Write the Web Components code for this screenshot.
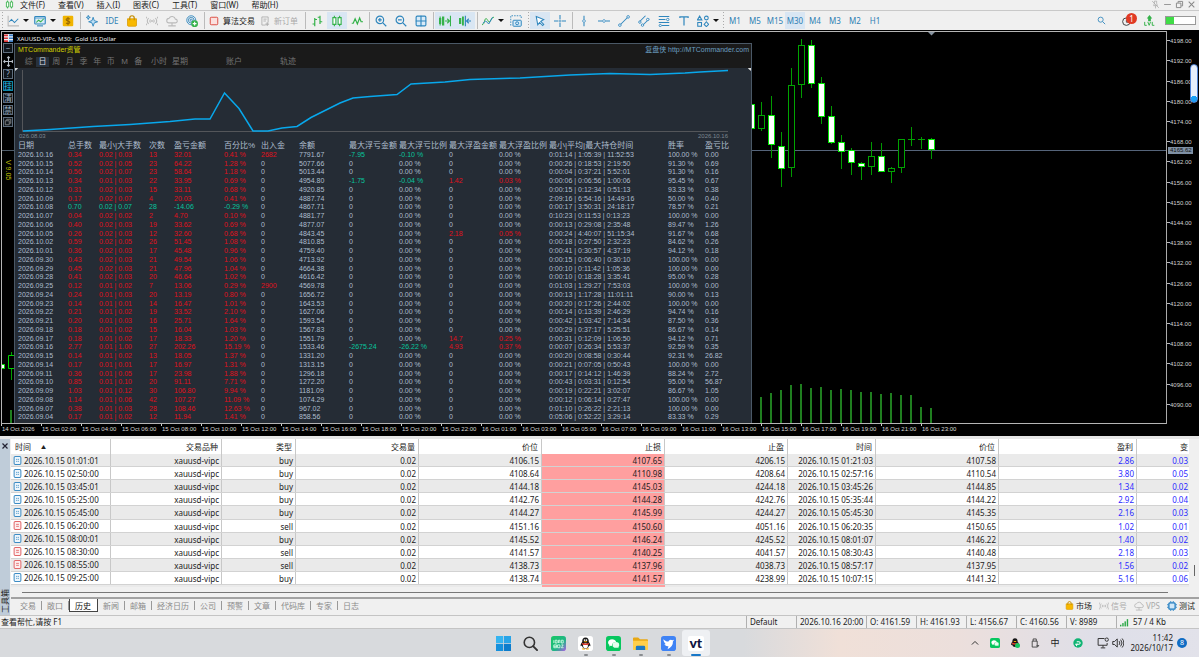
<!DOCTYPE html>
<html lang="zh-CN">
<head>
<meta charset="utf-8">
<title>XAUUSD-VIPc, M30</title>
<style>
  html, body { margin: 0; height: 100%; overflow: hidden; }
  body { font: 8px/10px "Noto Sans", "Noto Sans CJK SC", sans-serif; color: #222; background: #f0f0f0; }
</style>
</head>
<body>
<terminal-app></terminal-app>
<script>
const define = (name, css, html, after) => {
  const tpl = document.createElement('template');
  tpl.innerHTML = `<style>*{box-sizing:border-box}button{font:inherit;color:inherit;background:none;border:0;padding:0;margin:0}${css}</style>${html}`;
  customElements.define(name, class extends HTMLElement {
    connectedCallback() {
      if (this.shadowRoot) return;
      this.attachShadow({ mode: 'open' }).append(tpl.content.cloneNode(true));
      if (after) after(this.shadowRoot, this);
    }
  });
};

/* ---------- icons, drawn on a 16 unit square ---------- */
const B = '#2f86bd', G = '#35b24a', Y = '#f0b400', X = '#b9b9b9';
const st = (c, w = 1.4) => `fill="none" stroke="${c}" stroke-width="${w}"`;
const ICONS = {
  logo: `<g ${st(G, 1.5)}><path d="M4.500 1v14M11.500 1v14"/><path fill="#fff" d="M2.500 3.500h4v9h-4zM9.500 3.500h4v9h-4z"/></g>`,
  linechart: `<path ${st(X)} d="M1.500 1v13.500H16"/><path ${st(B)} d="M3 9l3-3 4 4 5-5"/>`,
  chartwin: `<rect x="1" y="2" width="14" height="10" rx="1" fill="#d8ebf8" stroke="${B}" stroke-width="1.500"/><path ${st(G)} d="M3 10l3-3 3 2 4-4"/><path ${st(B)} d="M4 14.500h8"/><path stroke="${B}" d="M1 4h14"/>`,
  dollar: `<rect x="1" y="1" width="14" height="14" rx="1.500" fill="${Y}"/><path ${st('#9a6a00', 1.5)} d="M10.500 5.500c-1-1.300-5-1.300-5 .8 0 2.200 5 1.200 5 3.500 0 2-4 2-5 .6M8 2.500v11"/>`,
  spark: `<g fill="#bfe0f5" stroke="${B}" stroke-width="1.200"><path d="M9.500 3l1.500 4.500L15.500 9 11 10.500 9.500 15 8 10.500 3.500 9 8 7.500z"/><path d="M3 .5l.7 2 2 .7-2 .7L3 6l-.7-2L.5 3.200l2-.7z"/></g>`,
  bag: `<path d="M2 5h12v8.500a1.500 1.500 0 0 1-1.500 1.500h-9A1.500 1.500 0 0 1 2 13.500z" fill="#f8b800" stroke="#d99a00"/><path ${st('#c28b00', 1.6)} d="M5 7V4a3 3 0 0 1 6 0v3"/>`,
  signal: `<g ${st(X)}><path d="M3.500 4a6 6 0 0 0 0 8M1 2.500a9 9 0 0 0 0 11M12.500 4a6 6 0 0 1 0 8M15 2.500a9 9 0 0 1 0 11M6 6a3 3 0 0 0 0 4M10 6a3 3 0 0 1 0 4"/></g><circle cx="8" cy="8" r="1.200" fill="${X}"/>`,
  cloud: `<path ${st(X)} d="M4 10.500a3 3 0 0 1 0-6 4.500 4.500 0 0 1 8.500 1 2.500 2.500 0 0 1 0 5zM8 10.500v4M3 14.500h10"/>`,
  globe: `<g ${st(B, 1.2)}><circle cx="7" cy="7" r="6"/><circle cx="7" cy="7" r="3.800"/><circle cx="7" cy="7" r="1.500"/></g><circle cx="11.500" cy="11.500" r="4.500" fill="${G}"/><path stroke="#fff" stroke-width="1.500" d="M11.500 9v5M9 11.500h5"/>`,
  stop: `<rect x="2" y="2" width="12" height="12" rx="1.500" fill="#fbe0de" stroke="#dd5147" stroke-width="1.600"/>`,
  doc: `<path ${st('#aaa', 1.3)} d="M3 1.500h10v9M3 1.500v13h6M5.500 5h5M5.500 8h4"/><path stroke="#aaa" stroke-width="1.600" d="M11.500 10v6M8.500 13h6"/>`,
  bars: `<g ${st(G, 1.6)}><path d="M5 4v11M2 12h3M5 6h3M12 1v11M9 3h3M12 9h3"/></g>`,
  wave: `<path ${st(G, 1.6)} d="M1 11h2l2.500-6 3 7 3-8 2 5H16"/>`,
  zoomin: `<circle cx="6.500" cy="6.500" r="5" ${st(B, 1.6)}/><path ${st(B, 1.6)} d="M10.500 10.500L15 15M4 6.500h5M6.500 4v5"/>`,
  zoomout: `<circle cx="6.500" cy="6.500" r="5" ${st(B, 1.6)}/><path ${st(B, 1.6)} d="M10.500 10.500L15 15M4 6.500h5"/>`,
  find: `<circle cx="6.500" cy="6.500" r="4.500" ${st(B, 1.5)}/><path ${st(B, 1.6)} d="M10 10l4.500 4.500"/>`,
  grid: `<rect x="1.500" y="1.500" width="13" height="13" rx="1.500" fill="#d8ebf8" stroke="${B}" stroke-width="1.500"/><path stroke="${B}" stroke-width="1.500" d="M8 1v14M1 8h14"/>`,
  scroll: `<g fill="${G}"><rect x="0" y="4" width="3" height="8"/><rect x="4" y="2" width="3" height="12"/></g><path stroke="${G}" stroke-width="1.500" d="M1.500 2v12M8 8h5M11 5l3 3-3 3M15.300 1v14" fill="none"/>`,
  shift: `<g fill="${G}"><rect x="0" y="4" width="3" height="8"/><rect x="4" y="2" width="2.500" height="12"/></g><path stroke="${B}" stroke-width="1.500" d="M8.500 1v14M10 8h6M13 5l-3 3 3 3" fill="none"/>`,
  indic: `<path ${st(G, 1.3)} d="M0 13C4 13 3 3 6 5s2 7 5 3 2-5 5-5"/><path ${st(B, 1.3)} d="M1 11l4-3 4 4 5-9"/>`,
  camera: `<path ${st(B, 1.2)} stroke-dasharray="2 1.500" d="M1 14V1h14v4"/><rect x="4" y="7" width="11" height="8" rx="1" fill="#d8ebf8" stroke="${B}" stroke-width="1.300"/><circle cx="9.500" cy="11" r="2" ${st(B, 1.3)}/>`,
  cursor: `<path d="M3 2l10 4-4 2.500 4 4-1.500 1.500-4-4L5 13z" fill="#fff" stroke="${B}" stroke-width="1.400"/>`,
  cross: `<path ${st(B, 1.4)} d="M8 0v6M8 10v6M0 8h6M10 8h6"/><path fill="${B}" d="M7 7h2v2H7z"/>`,
  vline: `<path ${st(B)} d="M8 1v5M8 10v5"/><circle cx="8" cy="8" r="1.800" fill="#fff" stroke="${B}"/>`,
  hline: `<path ${st(B)} d="M0 8h6M10 8h6"/><circle cx="8" cy="8" r="1.800" fill="#fff" stroke="${B}"/>`,
  trend: `<path ${st(B)} d="M3 13L13 3"/><g fill="#fff" stroke="${B}" stroke-width="1.200"><circle cx="2.500" cy="13.500" r="1.700"/><circle cx="13.500" cy="2.500" r="1.700"/></g>`,
  channel: `<path ${st(B)} d="M2 9l8-8M6 14l9-9"/><g fill="#fff" stroke="${B}" stroke-width="1.200"><circle cx="2.500" cy="9.500" r="1.600"/><circle cx="13" cy="6" r="1.600"/><circle cx="6" cy="13.500" r="1.600"/></g>`,
  fib: `<path ${st(B)} d="M1 2h14M1 6h9M1 10h14M5 14h10"/><g fill="#fff" stroke="${B}" stroke-width="1.200"><circle cx="13" cy="6" r="1.600"/><circle cx="3" cy="14" r="1.500"/></g>`,
  text: `<path ${st(B, 1.6)} d="M2.500 4V2.500h11V4M8 2.500V14"/>`,
  shapes: `<g ${st(B)}><path d="M3.500 1.500l3 5h-6z"/><circle cx="12.500" cy="4" r="2.500"/><rect x="1" y="10" width="5" height="5"/><path d="M12.500 9l3 3.500-3 3-3-3z"/></g>`,
  user: `<circle cx="7" cy="9" r="6" ${st('#444', 1.6)}/><path ${st('#444')} d="M7 6v4h4"/>`,
  lvl: `<path fill="${G}" d="M8 0l4 5H10v4H6V5H4z"/><path ${st(G, 1.4)} d="M1 10v5h3M5.500 10l2 5 2-5M12 10v5h3"/>`,
  pin: `<g ${st('#aaa', 1.3)}><path d="M2 2l12 12M4 10h8M8 10v5M5 9l1-3V2h4v4l1 3"/></g>`,
  min: `<path ${st('#999', 1.8)} d="M2 8h12"/>`,
  restore: `<g ${st('#888', 1.7)}><path d="M2.500 5.500h8v8h-8zM5.500 5V2.500h8v8H11"/></g>`,
  close: `<path ${st('#888', 1.8)} d="M3 3l10 10M13 3L3 13"/>`,
  closed: `<path ${st('#223', 2.4)} d="M3 3l10 10M13 3L3 13"/>`,
  flag: `<rect width="16" height="14" fill="#e8eef4"/><path fill="#d33" d="M0 1h7v3H0zM0 6h7v3H0zM0 11h7v3H0z"/><path fill="#3b7dc4" d="M9 1h7v3H9zM9 6h7v3H9zM9 11h7v3H9z"/>`,
  move: `<path ${st('#b9c0c8', 1.5)} d="M8 1v14M1 8h14M6 3l2-2 2 2M6 13l2 2 2-2M3 6L1 8l2 2M13 6l2 2-2 2"/>`,
  chip: `<rect x="3" y="3" width="10" height="10" rx="1.500" fill="#cfe7f8" stroke="#1878be" stroke-width="2"/><path ${st('#1878be', 1.3)} d="M6 0v2M10 0v2M6 14v2M10 14v2M0 6h2M0 10h2M14 6h2M14 10h2"/>`,
  net: `<g fill="#2aa845"><rect x="0" y="12" width="2.500" height="3"/><rect x="4" y="9" width="2.500" height="6"/><rect x="8" y="6" width="2.500" height="9"/><rect x="12" y="2" width="2.500" height="13"/></g>`,
  orderb: `<rect x="2" y="1" width="12" height="14" rx="2" fill="#eef6fc" stroke="#3d8cc4" stroke-width="1.800"/><path stroke="#3d8cc4" stroke-width="1.500" d="M5.500 6h2M8.500 6h2M5.500 9.500h2M8.500 9.500h2"/>`,
  orders: `<rect x="2" y="1" width="12" height="14" rx="2" fill="#fdeeee" stroke="#e2686a" stroke-width="1.800"/><path stroke="#e2686a" stroke-width="1.500" d="M5.500 6h5M5.500 9.500h5"/>`,
  win: `<g fill="#1590dc"><rect x="0" y="0" width="7.600" height="7.600" fill="#35b4f0"/><rect x="8.400" y="0" width="7.600" height="7.600" fill="#28a4e8"/><rect x="0" y="8.400" width="7.600" height="7.600"/><rect x="8.400" y="8.400" width="7.600" height="7.600" fill="#0c7ccc"/></g>`,
  search: `<circle cx="6.800" cy="6.800" r="5.500" ${st('#333', 1.7)}/><path stroke="#333" stroke-width="2" stroke-linecap="round" d="M11 11l4 4"/>`,
  iobit: `<defs><linearGradient id="g" x2="1" y2="1"><stop offset="0" stop-color="#17c964"/><stop offset=".6" stop-color="#21b487"/><stop offset="1" stop-color="#b25be8"/></linearGradient></defs><rect width="16" height="16" rx="3" fill="url(#g)"/><g ${st('#d8ffe8', .9)}><path d="M3 4.500v3M4.500 4.500h2v3h-2zM8 7.500v-3h1.500v3M11 4.500v3h2v-3zM3 9.500h3v3H3zM3 11h3M7 9.500h2.500v3H7zM11 9.500h2l-2 3h2.500"/></g>`,
  qq: `<rect width="16" height="16" rx="3" fill="#fff"/><path fill="#161616" d="M8 1.500c-2.500 0-3.700 2-3.500 4.500C3 8 2.300 10 3 11l1.200-1c.5 2.500 2 3.500 3.800 3.500s3.300-1 3.800-3.500l1.200 1c.7-1 0-3-1.500-5C11.700 3.500 10.500 1.500 8 1.500z"/><ellipse cx="8" cy="10.500" rx="2.600" ry="2.700" fill="#fff"/><path fill="#e23b2e" d="M4.500 7.200c2 1.200 5 1.200 7 0l.3 1.500c-2.400 1.300-5.200 1.300-7.600 0z"/><path fill="#f5a400" d="M6 6c1.300-.6 2.700-.6 4 0-1 .9-3 .9-4 0zM4 13.500c1-.9 3-.7 3.700.5-1.300.8-2.900.6-3.700-.5zM12 13.500c-1-.9-3-.7-3.700.5 1.300.8 2.900.6 3.700-.5z"/><circle cx="7" cy="4.300" r=".9" fill="#fff"/><circle cx="9" cy="4.300" r=".9" fill="#fff"/>`,
  qqtray: `<path fill="#161616" d="M8 .5C5 .5 3.700 3 3.900 5.500 2 8 1.300 10.500 2 11.500l1.500-1c.5 3 2.300 4 4.500 4s4-1 4.500-4l1.500 1c.7-1 0-3.500-1.900-6C12.300 3 11 .5 8 .5z"/><path fill="#e23b2e" d="M3.500 7c2.500 1.600 6.500 1.600 9 0l.3 2.500c-3 1.600-6.600 1.600-9.600 0z"/><path fill="#f5a400" d="M5.500 5.500c1.600-.8 3.400-.8 5 0-1.200 1.200-3.800 1.200-5 0z"/><circle cx="12" cy="12" r="4" fill="#15c862"/>`,
  wechat: `<rect width="16" height="16" rx="3" fill="#07c75f"/><path fill="#fff" d="M6.500 3.500C4 3.500 2.200 5 2.200 7c0 1 .5 2 1.500 2.700l-.4 1.500 1.600-.8 1.300.2c0-2.500 2-4.200 4.600-4.200-.5-1.700-2.200-2.900-4.300-2.900z"/><ellipse cx="10.500" cy="9.500" rx="3.600" ry="3" fill="#e6fff0"/><path fill="#e6fff0" d="M12 12l1.300 1-.2-1.800z"/>`,
  folder: `<path fill="#e8a814" d="M0 2.500A1 1 0 0 1 1 1.500h4.500l2 2H15a1 1 0 0 1 1 1V7H0z"/><path fill="#ffcf4a" d="M0 5h16v9a1 1 0 0 1-1 1H1a1 1 0 0 1-1-1z"/><path fill="#1c79c4" d="M3 15v-3a1.500 1.500 0 0 1 1.500-1.500h7A1.500 1.500 0 0 1 13 12v3z"/>`,
  bird: `<rect width="16" height="16" rx="3" fill="#3f83f5"/><path fill="#fff" d="M2.500 3.500c2 2 4 2.600 5.500 2.400.7-1.800 2.500-2.600 4-1.300l2-.5-1.300 1.700C13 9.500 10.800 12 7 14l1-3C5.500 11.300 4 10 3.700 8.600l1.500.2C3.700 7.500 2.600 5.700 2.500 3.500z"/>`,
  up: `<path ${st('#333', 1.6)} d="M3 10.500l5-5 5 5"/>`,
  usb: `<g ${st('#333', 1.3)}><path d="M5 5V1.500h5V5M3.500 5h8v9.500h-8z"/></g><path fill="#555" d="M10 11h5l-2.500 4z"/>`,
  gcirc: `<circle cx="8" cy="8" r="7.500" fill="#10b474"/><path ${st('#fff', 1.6)} d="M5.500 13l1-4M6 6h3.500a2 2 0 0 1 0 4H3.500"/>`,
  mon: `<g ${st('#333', 1.3)}><path d="M10 2H1.500v9h12V8M5 14.500h6M8 11v3"/><circle cx="13" cy="3.500" r="2.200"/></g>`,
  spk: `<g ${st('#333', 1.3)}><path d="M1 6h2.500L7 2.500v11L3.500 10H1zM9.500 5.500a4 4 0 0 1 0 5M11.500 3.500a7 7 0 0 1 0 9M13.500 2a9 9 0 0 1 0 12"/></g>`
};
customElements.define('ui-icon', class extends HTMLElement {
  connectedCallback() {
    if (this.shadowRoot) return;
    this.attachShadow({ mode: 'open' }).innerHTML =
      `<style>:host{display:inline-block;width:var(--size,12px);height:var(--size,12px);flex:none}svg{display:block;width:100%;height:100%}</style><svg viewBox="0 0 16 16" aria-hidden="true">${ICONS[this.getAttribute('name')] || ''}</svg>`;
  }
});

/* ---------- menu bar ---------- */
define('menu-bar', `
  :host{display:flex;align-items:center;height:11px;flex:none;background:#f0f0f0;border-bottom:1px solid #c9c9c9;padding:0 3px 1px 5px;font-size:8px;line-height:9px}
  ui-icon{--size:9px}
  nav{display:flex;gap:13px;padding-left:6px;flex:1}
  .win{display:flex;gap:3px}
`, `<ui-icon name="logo"></ui-icon>
  <nav><button>文件(F)</button><button>查看(V)</button><button>插入(I)</button><button>图表(C)</button><button>工具(T)</button><button>窗口(W)</button><button>帮助(H)</button></nav>
  <div class="win"><button aria-label="pin"><ui-icon name="pin"></ui-icon></button><button aria-label="minimize"><ui-icon name="min"></ui-icon></button><button aria-label="restore"><ui-icon name="restore"></ui-icon></button><button aria-label="close"><ui-icon name="close"></ui-icon></button></div>`);

/* ---------- tool bar ---------- */
const tb = (n, on) => `<button class="b${on ? ' on' : ''}" aria-label="${n}"><ui-icon name="${n}"></ui-icon></button>`;
const combo = n => `<button class="c" aria-label="${n}"><ui-icon name="${n}"></ui-icon><i></i></button>`;
const sep = '<span class="s"></span>', dots = '<span class="s d"></span>';
define('tool-bar', `
  :host{display:flex;align-items:stretch;height:19px;flex:none;background:#f0f0f0;padding:1px 3px 1px 0;font-size:8px;line-height:16px;color:#2f7fb4}
  .b{width:20px;flex:none;display:flex;align-items:center;justify-content:center}
  .on{background:#d9e6f3}
  .c{width:27px;flex:none;display:flex;align-items:center;padding-left:3px}
  .c i{border:3px solid transparent;border-top-color:#111;border-bottom:0;margin-left:4px}
  .s{width:4px;flex:none;background:linear-gradient(#bbb,#bbb) center/1px 100% no-repeat}
  .d{background:repeating-linear-gradient(#aaa 0 1px,transparent 1px 3px) center/1px 100% no-repeat}
  .t{display:flex;align-items:center;gap:4px;padding-left:3px;flex:none;color:#222;--size:10px}
  .algo{width:51px}.order{width:46px;color:#aaa}
  .gap{flex:1}
  .right{display:flex;align-items:center;gap:10px}
  .bell{position:relative;display:flex;margin-left:6px}
  .bell b{position:absolute;left:4px;top:-3px;width:11px;height:11px;border-radius:6px;background:#e03a24;color:#fff;font-weight:400;font-size:8px;line-height:11px;text-align:center}
  .lvl{--size:11px;margin-left:2px}
  .bat{width:31px;height:9px;border:1px solid #999;background:linear-gradient(90deg,#3fdc46 8px,#fff 8px)}
`, `${dots}${combo('linechart')}${combo('chartwin')}${tb('dollar')}${sep}${tb('spark')}<button class="b">IDE</button>${tb('bag')}${tb('signal')}${tb('cloud')}${tb('globe')}${sep}
  <button class="t algo"><ui-icon name="stop"></ui-icon>算法交易</button><button class="t order"><ui-icon name="doc"></ui-icon>新订单</button>${sep}
  ${tb('bars')}${tb('logo', 1)}${tb('wave')}${sep}${tb('zoomin')}${tb('zoomout')}${tb('grid')}${sep}${tb('scroll', 1)}${tb('shift', 1)}${sep}${combo('indic')}${tb('camera')}${dots}
  ${tb('cursor', 1)}${tb('cross')}${sep}${['vline', 'hline', 'trend', 'channel', 'fib', 'text'].map(n => tb(n)).join('')}${combo('shapes')}${dots}
  ${['M1', 'M5', 'M15', 'M30', 'M4', 'M3', 'M2', 'H1'].map(t => `<button class="b${t === 'M30' ? ' on' : ''}">${t}</button>`).join('')}
  <span class="gap"></span><div class="right"><ui-icon name="find" style="--size:9px"></ui-icon><span class="bell"><ui-icon name="user" style="--size:10px"></ui-icon><b>1</b></span><ui-icon name="lvl" class="lvl"></ui-icon><span class="bat"></span></div>`);

/* ---------- side strip of the chart ---------- */
define('side-strip', `
  :host{display:flex;flex-direction:column;align-items:center;position:relative;z-index:0;width:12px;flex:none;gap:2px;font-size:8px;line-height:8px;color:#9aacbf}
  button{width:10px;height:10px;flex:none;border:1px solid #5d6c7c;display:flex;align-items:center;justify-content:center;overflow:hidden;background:#10161c}
  .move{border:0;height:12px;background:none;--size:11px}
  .on{color:#1cc0ea;border-color:#0d86a8}
  .ver{writing-mode:vertical-rl;color:#c4c400;font:7px/8px "Liberation Sans",sans-serif;margin-top:31px}
  svg{position:absolute;left:0;top:0;width:12px;height:100%;z-index:-1}
`, `<svg><g transform="translate(-2 -43)" fill="none"><path stroke="#4d5a68" d="M2 150.500h12"/><path stroke="#00a000" d="M11.500 352v3M11.500 369v11"/><path stroke="#00d000" d="M14 355.500h-5.500v13H14"/><path fill="#fff" stroke="#00e000" d="M0 364.500h4.500v4H0z"/><path stroke="#1f7f1f" stroke-width="2" d="M11 410v13"/></g></svg>
  <button>−</button><button class="move" aria-label="move"><ui-icon name="move"></ui-icon></button><button>?</button><button class="on">挂</button><button>清</button><button>禁</button><button aria-label="windows"><ui-icon name="restore" style="--size:8px"></ui-icon></button><span class="ver">V 9.05</span>`);

/* ---------- equity report ---------- */
const HEAD = ['日期', '总手数', '最小|大手数', '次数', '盈亏金额', '百分比%', '出入金', '余额', '最大浮亏金额', '最大浮亏比例', '最大浮盈金额', '最大浮盈比例', '最小|平均|最大持仓时间', '胜率', '盈亏比'];
const REPORT = `10.16;0.34;0.02 | 0.03;13;32.01;0.41;2682;7791.67;0:01:14 | 1:05:39 | 11:52:53;100.00;0.00;-7.95;-0.10
10.15;0.52;0.02 | 0.05;23;64.22;1.28;0;5077.66;0:00:26 | 0:18:53 | 2:19:50;91.30;0.69
10.14;0.56;0.02 | 0.07;23;58.64;1.18;0;5013.44;0:00:04 | 0:37:21 | 5:52:01;91.30;0.16
10.13;0.34;0.01 | 0.03;22;33.95;0.69;0;4954.80;0:00:06 | 0:06:56 | 1:00:06;95.45;0.67;-1.75;-0.04;1.42;0.03
10.12;0.31;0.02 | 0.03;15;33.11;0.68;0;4920.85;0:00:15 | 0:12:34 | 0:51:13;93.33;0.38
10.09;0.17;0.02 | 0.07;4;20.03;0.41;0;4887.74;2:09:16 | 6:54:16 | 14:49:16;50.00;0.40
10.08;0.70;0.02 | 0.07;28;-14.06;-0.29;0;4867.71;0:00:17 | 3:50:31 | 24:18:17;78.57;0.21
10.07;0.04;0.02 | 0.02;2;4.70;0.10;0;4881.77;0:10:23 | 0:11:53 | 0:13:23;100.00;0.00
10.06;0.40;0.02 | 0.03;19;33.62;0.69;0;4877.07;0:00:13 | 0:29:08 | 2:35:48;89.47;1.26
10.05;0.26;0.02 | 0.03;12;32.60;0.68;0;4843.45;0:00:24 | 4:40:07 | 51:15:34;91.67;0.68;;;2.18;0.05
10.02;0.59;0.02 | 0.05;26;51.45;1.08;0;4810.85;0:00:18 | 0:27:50 | 2:32:23;84.62;0.26
10.01;0.36;0.02 | 0.03;17;45.48;0.96;0;4759.40;0:00:41 | 0:30:57 | 4:37:19;94.12;0.18
09.30;0.43;0.02 | 0.03;21;49.54;1.06;0;4713.92;0:00:15 | 0:06:40 | 0:30:10;100.00;0.00
09.29;0.45;0.02 | 0.03;21;47.96;1.04;0;4664.38;0:00:10 | 0:11:42 | 1:05:36;100.00;0.00
09.28;0.41;0.02 | 0.03;20;46.64;1.02;0;4616.42;0:00:10 | 0:18:28 | 3:35:41;95.00;0.28
09.25;0.12;0.01 | 0.02;7;13.06;0.29;2900;4569.78;0:01:03 | 1:29:27 | 7:53:03;100.00;0.00
09.24;0.24;0.01 | 0.03;20;13.19;0.80;0;1656.72;0:00:13 | 1:17:28 | 11:01:11;90.00;0.13
09.23;0.14;0.01 | 0.01;14;16.47;1.01;0;1643.53;0:00:20 | 0:17:26 | 2:44:02;100.00;0.00
09.22;0.21;0.01 | 0.02;19;33.52;2.10;0;1627.06;0:00:14 | 0:13:39 | 2:46:29;94.74;0.16
09.21;0.20;0.01 | 0.03;16;25.71;1.64;0;1593.54;0:00:42 | 1:03:42 | 7:14:34;87.50;0.36
09.18;0.18;0.01 | 0.02;15;16.04;1.03;0;1567.83;0:00:29 | 0:37:17 | 5:25:51;86.67;0.14
09.17;0.18;0.01 | 0.02;17;18.33;1.20;0;1551.79;0:00:31 | 0:12:09 | 1:06:50;94.12;0.71;;;14.7;0.25
09.16;2.77;0.01 | 1.00;27;202.26;15.19;0;1533.46;0:00:07 | 0:26:34 | 5:53:37;92.59;0.35;-2675.24;-26.22;4.93;0.37
09.15;0.14;0.01 | 0.02;13;18.05;1.37;0;1331.20;0:00:20 | 0:08:58 | 0:30:44;92.31;26.82
09.14;0.17;0.01 | 0.01;17;16.97;1.31;0;1313.15;0:00:21 | 0:07:05 | 0:50:43;100.00;0.00
09.11;0.36;0.01 | 0.05;17;23.98;1.88;0;1296.18;0:00:17 | 0:14:12 | 1:46:39;88.24;2.72
09.10;0.85;0.01 | 0.10;20;91.11;7.71;0;1272.20;0:00:43 | 0:03:31 | 0:12:54;95.00;56.87
09.09;1.03;0.01 | 0.12;30;106.80;9.94;0;1181.09;0:00:19 | 0:22:21 | 3:02:07;86.67;1.05
09.08;1.14;0.01 | 0.06;42;107.27;11.09;0;1074.29;0:00:12 | 0:06:14 | 0:27:47;100.00;0.00
09.07;0.38;0.01 | 0.03;28;108.46;12.63;0;967.02;0:01:10 | 0:26:22 | 2:21:13;100.00;0.00
09.04;0.17;0.01 | 0.02;12;11.94;1.41;0;858.56;0:05:06 | 0:52:22 | 3:29:14;83.33;0.29`.split('\n').map(r => r.split(';'));
define('equity-report', `
  :host{display:flex;flex-direction:column;width:738px;flex:none;border:1px solid #4a5866;border-bottom:0;background:#252c35;color:#adbdce;font:7px/9px "Liberation Sans","Noto Sans CJK SC",sans-serif}
  header{background:#1a1a1a;height:24px;flex:none;display:flex;flex-direction:column}
  .t{display:flex;justify-content:space-between;padding:1px 2px 0 3px;color:#d2d200}
  .t a{color:#6c9fc0;text-decoration:none}
  nav{display:flex;font-size:8px;line-height:10px;color:#737373;padding:3px 0 0 7px}
  .p{display:grid;grid-template-columns:repeat(9,1fr);width:123px;text-align:center}
  .on{color:#d5dde5;background:#27313d}
  .n{display:flex}.n button:nth-child(1){margin-left:6px}.n button:nth-child(2){margin-left:5px}.n button:nth-child(3){margin-left:38px}.n button:nth-child(4){margin-left:38px}
  svg{display:block;height:73px;width:736px;flex:none}
  table{display:flex;flex-direction:column;flex:1;min-height:0;padding-bottom:2px}
  tbody{display:grid;grid-auto-rows:minmax(0,1fr);flex:1;min-height:0}
  tr{display:grid;grid-template-columns:50px 31px 50px 25px 50px 37px 38px 50px 50px 50px 50px 50px 119px 37px 46px;align-items:center;padding-left:3px}
  th,td{padding:0;text-align:left;font-weight:400;white-space:nowrap;height:9px}
  thead{font-size:8px;color:#b0bfcf}
  .r{color:#e0101c}.g{color:#08c49e}
`, `<header><div class="t"><span>MTCommander资管</span><a href="http://MTCommander.com">复盘侠 http://MTCommander.com</a></div>
  <nav><div class="p">${['综', '日', '周', '月', '季', '年', '币', 'M', '备'].map(x => `<button class="${x === '日' ? 'on' : ''}">${x}</button>`).join('')}</div><div class="n"><button>小时</button><button>星期</button><button>账户</button><button>轨迹</button></div></nav></header>
  <svg><g transform="translate(-15 -68)"><path stroke="#54565a" fill="none" d="M22.500 70v61.500H728"/><polyline fill="none" stroke="#08a8ec" stroke-width="1.500" points="23,131 50,129.500 93,126.500 130,124.500 170,121.500 195,119 210,119 224.500,93 239,108.500 253,131 268,131 282,128 297,126.500 311,117.500 325,110.500 340,103 353,98 370,96.500 397,94.500 411,84 445,82 470,79.500 520,78 570,75 610,73.500 650,74.500 685,73 700,72 728,70.500"/><path fill="#ddd" d="M15 66l3 2.500-3 2.500zM751 66l-3 2.500 3 2.500z"/><g fill="#7d8791" font-size="6"><text x="19" y="138">026.08.03</text><text x="728" y="138" text-anchor="end">2026.10.16</text></g></g></svg>
  <table><thead><tr>${HEAD.map(h => `<th>${h}</th>`).join('')}</tr></thead><tbody>${REPORT.map(r => {
    const c = r[4][0] === '-' ? 'g' : 'r', td = (v, k = '') => `<td class="${k}">${v}</td>`;
    return `<tr>${td('2026.' + r[0])}${td(r[1], c)}${td(r[2], c)}${td(r[3], c)}${td(r[4], c)}${td(r[5] + ' %', c)}${td(r[6], r[6] === '0' ? '' : 'r')}${td(r[7])}${td(r[11] || 0, r[11] ? 'g' : '')}${td((r[12] || '0.00') + ' %', r[12] ? 'g' : '')}${td(r[13] || 0, r[13] ? 'r' : '')}${td((r[14] || '0.00') + ' %', r[14] ? 'r' : '')}${td(r[8])}${td(r[9] + ' %')}${td(r[10])}</tr>`;
  }).join('')}</tbody></table>`);

/* ---------- candles: centre, wick top, body top, body bottom, wick bottom, filled ---------- */
const CANDLES = [[751, 104, 104, 129, 129, 1], [761, 102, 115, 129, 131, 0], [771, 96, 115, 145, 158, 1], [781, 132, 146, 169, 187, 1], [791, 68, 85, 168, 177, 0], [801, 39, 45, 85, 98, 0], [811, 40, 45, 84, 88, 1], [821, 77, 83, 117, 124, 1], [831, 106, 116, 143, 144, 1], [841, 135, 142, 152, 169, 1], [851, 148, 150, 163, 175, 1], [861, 162, 163, 167, 180, 1], [871, 142, 156, 167, 175, 0], [881, 143, 156, 172, 172, 1], [891, 167, 168, 172, 183, 0], [901, 139, 139, 168, 173, 0], [911, 127, 139, 139, 146, 0], [921, 137, 139, 139, 149, 0], [931, 138, 139, 150, 159, 1]];
const VOL = [397, 393, 390, 385, 384, 388, 387, 390, 389, 390, 392, 392, 394, 393, 395, 395, 407, 408];
define('candle-plot', `:host{display:block;flex:1;min-width:0;overflow:hidden}svg{display:block;width:100%;height:100%}`,
  `<svg><g transform="translate(-752 -32)"><path stroke="#55647a" d="M752 150.500h3000"/>
  ${CANDLES.map(([x, a, b, c, d, f]) => `<path stroke="#009a00" d="M${x + .5} ${a}V${b}M${x + .5} ${c}V${d}"/><rect x="${x - 2.5}" y="${b + .5}" width="6" height="${Math.max(c - b - (c > b ? 1 : 0), 0.01)}" fill="${f ? '#fff' : '#000'}" stroke="${f ? '#00e400' : '#00a400'}"/>`).join('')}
  ${VOL.map((y, i) => `<rect x="${760 + i * 10}" y="${y}" width="2" height="${423 - y}" fill="#1f7f1f"/>`).join('')}
  <path fill="#8793a0" d="M928 32h7l-3.500 3.500z"/></g></svg>`);

define('price-axis', `
  :host{display:grid;grid-auto-rows:minmax(0,1fr);width:33px;flex:none;border-left:1px solid #aaa;padding-bottom:9px;position:relative;align-items:center;color:#d0d0d0;font:6px/8px "Liberation Sans",sans-serif}
  span::before{content:"";display:inline-block;width:3px;height:1px;background:#bbb;vertical-align:2px}
  b{position:absolute;left:1px;top:116px;width:25px;height:7px;line-height:7px;background:#7f90a4;color:#111;font-weight:400;padding-left:2px}
  i{position:absolute;right:1px;top:33px;width:8px;height:39px;border-radius:4px;background:radial-gradient(circle at 50% 34px,#1ba2f6 0 3px,#e6effb 3px);border:1px solid #4f83d6}
`, `${Array.from({ length: 19 }, (_, i) => `<span>${4198 - i * 6}.00</span>`).join('')}<b>4165.62</b><i></i>`);

define('time-axis', `
  :host{display:flex;height:12px;flex:none;padding-left:1px;color:#d8d8d8;font:6px/8px "Liberation Sans",sans-serif}
  span{width:40px;flex:none;white-space:nowrap;border-left:1px solid transparent;border-image:linear-gradient(#ccc 3px,transparent 3px) 1;padding-top:1px}
`, ['14 Oct 2026', ...[2, 4, 6, 8, 10, 12, 14, 16, 18, 20, 22].map(h => `15 Oct ${String(h).padStart(2, 0)}:00`), ...[1, 3, 5, 7, 9, 11, 13, 15, 17, 19, 21, 23].map(h => `16 Oct ${String(h).padStart(2, 0)}:00`)].map(t => `<span>${t}</span>`).join(''));

define('chart-pane', `
  :host{display:flex;flex-direction:column;flex:1;min-height:0;background:#000;padding-top:1px}
  .main{display:flex;flex:1;min-height:0}
  .plot{display:flex;flex:1;min-width:0;min-height:0;margin-left:1px;border:1px solid #b5b5b5;border-right:0}
  .left{display:flex;flex-direction:column;flex:none;min-height:0}
  .title{height:11px;flex:none;display:flex;align-items:center;gap:4px;padding:2px 0 0 2px;color:#f0f0f0;font-size:6px;line-height:8px;--size:9px;white-space:pre}
  .body{display:flex;flex:1;min-height:0}
`, `<div class="main"><div class="plot"><div class="left"><div class="title"><ui-icon name="flag"></ui-icon><span>XAUUSD-VIPc, M30:  Gold US Dollar</span></div><div class="body"><side-strip></side-strip><equity-report></equity-report></div></div><candle-plot></candle-plot></div><price-axis></price-axis></div><time-axis></time-axis>`);

/* ---------- trade history ---------- */
const DEALS = `01:01:01,buy,4106.15,4107.65,4206.15,01:21:03,4107.58,2.86,0.03
02:50:00,buy,4108.64,4110.98,4208.64,02:57:16,4110.54,3.80,0.05
03:45:01,buy,4144.18,4145.03,4244.18,03:45:26,4144.85,1.34,0.02
05:25:00,buy,4142.76,4144.28,4242.76,05:35:44,4144.22,2.92,0.04
05:45:00,buy,4144.27,4145.99,4244.27,05:45:30,4145.35,2.16,0.03
06:20:00,sell,4151.16,4150.60,4051.16,06:20:35,4150.65,1.02,0.01
08:00:01,buy,4145.52,4146.24,4245.52,08:01:07,4146.22,1.40,0.02
08:30:00,sell,4141.57,4140.25,4041.57,08:30:43,4140.48,2.18,0.03
08:55:00,sell,4138.73,4137.96,4038.73,08:57:17,4137.95,1.56,0.02
09:25:00,buy,4138.74,4141.57,4238.99,10:07:15,4141.32,5.16,0.06`.split('\n').map(r => r.split(','));
define('history-table', `
  :host{display:block;flex:1;min-width:0;background:#fff}
  table{display:block}
  thead{display:block;height:15px}
  tbody{display:grid;grid-template-rows:repeat(10,minmax(0,1fr));height:131px}
  tr{display:grid;grid-template-columns:100fr 111fr 74fr 123fr 123fr 123fr 123fr 88fr 123fr 138fr 52fr}
  th,td{padding:0 2px 0 0;text-align:right;font-weight:400;white-space:nowrap;overflow:hidden;border-right:1px solid #c8c8c8;line-height:13px}
  th{height:15px;line-height:15px;padding-right:3px}
  th:first-child{text-align:left;padding-left:4px}
  th:last-child,td:last-child{border-right:0;padding-right:1px}
  tbody tr{border-bottom:1px solid #d2d2d2}
  tbody tr:nth-child(odd){background:#eaeaea}
  td:nth-child(6){background:#ff9f9f}
  td:nth-child(n+10){color:#2a2aff}
  td:first-child{display:flex;align-items:center;gap:2px;padding-left:2px;--size:9px}
  small{font-size:5px;line-height:8px;margin-left:10px;vertical-align:1px}
  .next{display:grid;height:2px;background:#eaeaea;grid-template-columns:531fr 123fr 524fr}.next i{grid-column:2;background:#ff9f9f}
`, `<table><thead><tr>${['时间<small>▲</small>', '交易品种', '类型', '交易量', '价位', '止损', '止盈', '时间', '价位', '盈利', '变'].map(h => `<th>${h}</th>`).join('')}</tr></thead>
  <tbody>${DEALS.map(d => `<tr><td><ui-icon name="order${d[1][0]}"></ui-icon>2026.10.15 ${d[0]}</td><td>xauusd-vipc</td><td>${d[1]}</td><td>0.02</td><td>${d[2]}</td><td>${d[3]}</td><td>${d[4]}</td><td>2026.10.15 ${d[5]}</td><td>${d[6]}</td><td>${d[7]}</td><td>${d[8]}</td></tr>`).join('')}</tbody></table><div class="next"><i></i></div>`);

define('toolbox-panel', `
  :host{display:flex;flex:none;border-top:3px solid #e6e6e6;background:#f0f0f0}
  aside{width:10px;flex:none;background:#bfccd9;display:flex;flex-direction:column;align-items:center;justify-content:space-between;padding:3px 0 2px;margin-right:1px}
  aside span{writing-mode:vertical-rl;text-orientation:sideways;transform:rotate(180deg);line-height:10px}
  .col{flex:1;min-width:0}
  .row{display:flex}
  .vs{width:10px;flex:none;display:flex;flex-direction:column;justify-content:flex-end;align-items:center;padding-bottom:11px}
  .vs i{width:1px;height:11px;background:#666}
  .hs{height:10px;padding:5px 31px 0 11px}.hs i{display:block;height:1px;background:#777}
  .tabs{display:flex;border-top:2px solid #a2a2a2;height:18px;padding:0 4px}
  nav{display:flex;flex:1;color:#8a8a8a;align-items:flex-start}
  nav button{padding:0 6px 0 5px;height:13px;line-height:13px;background:linear-gradient(#999,#999) right center/1px 9px no-repeat}
  nav button:last-child{background:none}
  nav button.on{background:#fff;border:1px solid #444;border-top:0;color:#111}
  .svc{display:flex;gap:7px;align-items:center;color:#aaa;--size:10px;padding-bottom:3px}
  .svc button{display:flex;align-items:center;gap:2px}.svc .k{color:#222}
`, `<aside><ui-icon name="closed" style="--size:8px"></ui-icon><span>工具箱</span></aside><div class="col"><div class="row"><history-table></history-table><div class="vs"><i></i></div></div><div class="hs"><i></i></div>
  <div class="tabs"><nav>${['交易', '敞口', '历史', '新闻', '邮箱', '经济日历', '公司', '预警', '文章', '代码库', '专家', '日志'].map(t => `<button class="${t === '历史' ? 'on' : ''}">${t}</button>`).join('')}</nav>
  <div class="svc"><button class="k"><ui-icon name="bag" style="--size:9px"></ui-icon>市场</button><button><ui-icon name="signal"></ui-icon>信号</button><button><ui-icon name="cloud"></ui-icon>VPS</button><button class="k"><ui-icon name="chip"></ui-icon>测试</button></div></div></div>`);

define('status-bar', `
  :host{display:flex;flex:none;height:14px;border-top:1px solid #c4c4c4;border-bottom:1px solid #c4c4c4;background:#f0f0f0;line-height:12px;white-space:nowrap}
  .m{flex:1;padding-left:1px}
  span{border-left:1px solid #b0b0b0;padding-left:3px}
  .w5{width:50px}.w7{width:70px}.w8{width:83px;display:flex;align-items:center;gap:4px;--size:9px}
`, `<div class="m">查看帮忙,请按 F1</div><span class="w5">Default</span><span class="w7">2026.10.16 20:00</span><span class="w5">O: 4161.59</span><span class="w5">H: 4161.93</span><span class="w5">L: 4156.67</span><span class="w5">C: 4160.56</span><span class="w5">V: 8989</span><span class="w8"><ui-icon name="net"></ui-icon>57 / 4 Kb</span>`);

define('task-bar', `
  :host{display:grid;grid-template-columns:1fr 220px 1fr;flex:none;height:28px;align-items:center;background:linear-gradient(90deg,#d8dadd 0 62%,#f0e0d8 70%,#ecdfdc 80%,#dedfe9 92%,#e2e2ea);color:#222}
  .apps{grid-column:2;display:grid;grid-template-columns:repeat(8,1fr);--size:15px}
  .apps button{position:relative;height:26px;display:flex;align-items:center;justify-content:center;border-radius:3px}
  .run::after{content:"";position:absolute;left:12px;bottom:0;width:4px;height:2px;border-radius:1px;background:#8a8d90}
  .apps .on{background:#eef0f3}.on::after{left:9px;width:10px;background:#1878c8}
  .vt{background:#fff;border-radius:2px;width:16px;height:15px;font:900 14px/13px Lato,sans-serif;color:#0e1440;text-align:center}
  .tray{display:flex;align-items:center;justify-content:flex-end;gap:10px;--size:10px;padding-right:12px}
  .ime{font-size:9px}
  .pair{display:flex;gap:3px;--size:12px;margin-left:4px}.gc{margin-left:4px}
  time{text-align:right;line-height:10px;margin-left:-4px}
  .num{width:10px;height:10px;border-radius:5px;background:#0f6cc4;color:#fff;font-size:7px;line-height:10px;text-align:center;margin-left:-6px}
`, `<div class="apps">${[['win'], ['search'], ['iobit'], ['qq', 1], ['wechat', 1], ['folder', 1], ['bird', 1]].map(([n, r]) => `<button class="${r ? 'run' : ''}" aria-label="${n}"><ui-icon name="${n}"></ui-icon></button>`).join('')}<button class="run on"><span class="vt">vt</span></button></div>
  <div class="tray"><ui-icon name="up"></ui-icon><ui-icon name="wechat"></ui-icon><ui-icon name="qqtray"></ui-icon><ui-icon name="usb"></ui-icon><span class="ime">中</span><ui-icon class="gc" name="gcirc"></ui-icon><span class="pair"><ui-icon name="mon"></ui-icon><ui-icon name="spk"></ui-icon></span><time>11:42<br>2026/10/17</time><span class="num">8</span></div>`);

define('terminal-app', `:host{display:flex;flex-direction:column;height:100vh}`,
  `<menu-bar></menu-bar><tool-bar></tool-bar><chart-pane></chart-pane><toolbox-panel></toolbox-panel><status-bar></status-bar><task-bar></task-bar>`);
</script>
</body>
</html>
